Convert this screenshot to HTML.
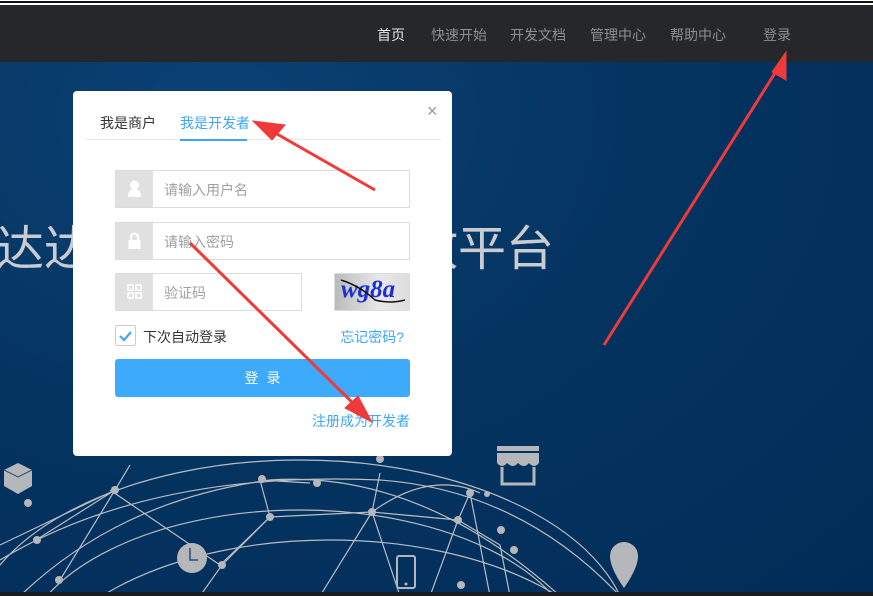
<!DOCTYPE html>
<html><head><meta charset="utf-8"><style>
*{margin:0;padding:0;box-sizing:border-box}
html,body{width:873px;height:596px;overflow:hidden}
body{position:relative;font-family:"Liberation Sans","Noto Sans CJK SC",sans-serif;background:#fff}
.topline{position:absolute;left:0;top:1px;width:873px;height:2px;background:#111}
.nav{position:absolute;left:0;top:5px;width:873px;height:57px;background:#26272b}
.nav span{position:absolute;top:20px;font-size:14px;color:#8d8e91}
.bg{position:absolute;left:0;top:62px;width:873px;height:530px;background:radial-gradient(ellipse at 25% 10%,#0b4275 0%,#053461 45%,#012c58 100%)}
.bottom{position:absolute;left:0;top:592px;width:873px;height:4px;background:#1b1c1e}
.big{position:absolute;top:220px;font-size:48px;color:#c9ccd2;letter-spacing:0px;line-height:60px}
.modal{position:absolute;left:73px;top:91px;width:379px;height:365px;background:#fff;border-radius:4px}
.tab{position:absolute;top:22px;font-size:14px}
.inp{position:absolute;left:42px;height:38px;border:1px solid #dcdcdc;background:#fff}
.inp .ic{position:absolute;left:0;top:0;width:37px;height:36px;background:#e0e0e0}
.inp .ph{position:absolute;left:48px;top:9px;font-size:14px;color:#a0a0a0}
</style></head><body>
<div class="topline"></div>
<div class="nav">
<span style="left:377px;color:#e6e6e6">首页</span>
<span style="left:431px">快速开始</span>
<span style="left:510px">开发文档</span>
<span style="left:590px">管理中心</span>
<span style="left:670px">帮助中心</span>
<span style="left:763px">登录</span>
</div>
<div class="bg"></div>
<div class="bottom"></div>
<svg style="position:absolute;left:0;top:0" width="873" height="592" fill="none" stroke="#b9bcc2" stroke-width="1.2">
<ellipse cx="300" cy="640" rx="330" ry="180"/>
<ellipse cx="300" cy="660" rx="280" ry="150"/>
<ellipse cx="330" cy="700" rx="300" ry="160"/>
<path d="M0 560 Q150 470 380 480 Q520 490 620 596"/>
<path d="M20 596 Q120 500 270 480 Q420 470 560 596"/>
<path d="M110 490 L220 565 L270 517 L372 512 L458 520 L500 545 L510 596"/>
<path d="M115 490 L60 580 M115 490 L36 540 M270 517 L222 565 L200 596 M372 512 L400 596 M372 512 L320 596 M458 520 L430 596 M270 517 L260 480 L310 483 M380 473 L372 512 M470 493 L458 520 M470 493 L490 596 M130 465 L115 490 L0 545"/>
<path d="M372 512 Q430 470 480 493"/>
</svg>
<svg style="position:absolute;left:0;top:0" width="873" height="592" fill="#b5b7bb">
<circle cx="115" cy="490" r="4"/><circle cx="270" cy="517" r="4"/><circle cx="372" cy="512" r="4"/><circle cx="317" cy="483" r="4"/><circle cx="262" cy="479" r="4"/><circle cx="458" cy="520" r="4"/><circle cx="470" cy="493" r="4"/><circle cx="487" cy="494" r="3"/><circle cx="501" cy="530" r="4"/><circle cx="514" cy="550" r="4"/><circle cx="28" cy="503" r="4"/><circle cx="37" cy="540" r="4"/><circle cx="59" cy="580" r="4"/><circle cx="222" cy="565" r="4"/><circle cx="461" cy="585" r="4"/><circle cx="380" cy="459" r="4"/>
<circle cx="192" cy="558" r="15"/><path d="M190 548 v12 h8" stroke="#2a4d78" stroke-width="1.5" fill="none"/>
<path d="M610 556 a14 14 0 1 1 28 0 q0 12 -14 32 q-14 -20 -14 -32z"/>
<rect x="397" y="556" width="18" height="32" rx="2" fill="none" stroke="#b5b7bb" stroke-width="2"/><circle cx="406" cy="584" r="1.5"/>
<path d="M4 470 L18 463 L32 470 L32 486 L18 494 L4 486z"/><path d="M4 470 L18 477 L32 470" stroke="#2a4d78" fill="none"/>
<rect x="497" y="446" width="42" height="5"/><path d="M497 453 h42 v10 q-5 6 -10 0 q-5 6 -11 0 q-5 6 -11 0 q-5 6 -10 0z"/>
<path d="M502 467 v17 h32 v-17" fill="none" stroke="#b5b7bb" stroke-width="3"/>
</svg>
<div class="big" style="left:-4px">达达</div>
<div class="big" style="left:410px">放平台</div>
<div class="modal">
<div class="tab" style="left:27px;color:#333">我是商户</div>
<div class="tab" style="left:107px;color:#3ea7f5">我是开发者</div>
<div style="position:absolute;left:12px;top:48px;width:356px;height:1px;background:#e8e8e8"></div>
<div style="position:absolute;left:107px;top:48px;width:67px;height:2px;background:#3ea7f5"></div>
<div style="position:absolute;left:354px;top:10px;font-size:18px;color:#999">×</div>
<div class="inp" style="top:79px;width:295px"><div class="ic"><svg width="37" height="36"><circle cx="18.5" cy="14" r="4.5" fill="#fff"/><path d="M12 26 q0-8 6.5-8 q6.5 0 6.5 8z" fill="#fff"/></svg></div><div class="ph">请输入用户名</div></div>
<div class="inp" style="top:131px;width:295px"><div class="ic"><svg width="37" height="36"><path d="M15 17 v-3 a3.5 3.5 0 0 1 7 0 v3" stroke="#fff" stroke-width="2" fill="none"/><rect x="12.5" y="17" width="12" height="9" fill="#fff"/></svg></div><div class="ph">请输入密码</div></div>
<div class="inp" style="top:182px;width:187px"><div class="ic"><svg width="37" height="36"><g fill="none" stroke="#fff" stroke-width="1.5"><rect x="12" y="11" width="5" height="5"/><rect x="20" y="11" width="5" height="5"/><rect x="12" y="19" width="5" height="5"/><rect x="20" y="19" width="5" height="5"/></g></svg></div><div class="ph">验证码</div></div>
<div style="position:absolute;left:261px;top:182px;width:76px;height:38px;background:linear-gradient(90deg,#bbb,#e8e8e8 60%,#ddd);border:1px solid #ddd;overflow:hidden"><span style="position:absolute;left:6px;top:2px;font-size:25px;font-weight:bold;color:#1a2fd6;font-family:'Liberation Serif',serif;font-style:italic">wg8a</span><svg style="position:absolute;left:0;top:0" width="76" height="38"><path d="M6 6 Q25 12 40 26 Q55 30 70 26" stroke="#111" stroke-width="1.5" fill="none"/></svg></div>
<div style="position:absolute;left:42px;top:234px;width:21px;height:21px;border:1px solid #ccc;border-radius:2px"><svg width="19" height="19"><path d="M4 10 l4 4 l7 -8" stroke="#3ea7f5" stroke-width="2.2" fill="none"/></svg></div>
<div style="position:absolute;left:70px;top:236px;font-size:14px;color:#333">下次自动登录</div>
<div style="position:absolute;right:48px;top:236px;font-size:14px;color:#3ea7f5">忘记密码?</div>
<div style="position:absolute;left:42px;top:268px;width:295px;height:38px;background:#3eaafc;border-radius:3px;color:#fff;font-size:14px;text-align:center;line-height:38px;letter-spacing:8px;text-indent:8px">登录</div>
<div style="position:absolute;right:42px;top:320px;font-size:14px;color:#3ea7f5;white-space:nowrap">注册成为开发者</div>
</div>
<svg style="position:absolute;left:0;top:0" width="873" height="592">
<g stroke="#f03a3a" fill="#f03a3a">
<path d="M375 190 L270 130" stroke-width="3"/><path d="M253 121 L285 125 L272 140z"/>
<path d="M190 243 L360 410" stroke-width="3"/><path d="M372 422 L345 408 L358 396z"/>
<path d="M604 345 L780 65" stroke-width="3"/><path d="M786 52 L786 80 L772 72z"/>
</g></svg>
</body></html>
